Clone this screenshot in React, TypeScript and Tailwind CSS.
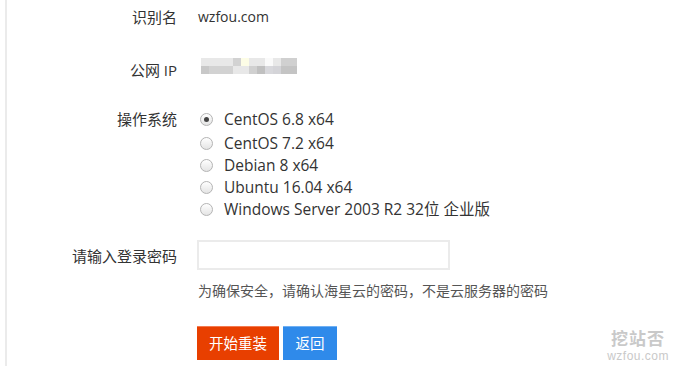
import React from "react";

const ipTop = [
  "bg-[#e8e8e8]", "bg-[#e8e8e8]", "bg-[#e8e8e8]", "bg-[#e8e8e8]", "bg-[#d2d2d2]", "bg-[#fdfde6]",
  "bg-[#e8e8e8]", "bg-[#e8e8e8]", "bg-[#fafafa]", "bg-[#e8e8e8]", "bg-[#d0d0d0]", "bg-[#d0d0d0]",
];
const ipBottom = [
  "bg-[#c8c8c8]", "bg-[#d2d2d2]", "bg-[#d2d2d2]", "bg-[#d2d2d2]", "bg-[#e8e8e8]", "bg-[#e8e8e8]",
  "bg-[#d0d0d0]", "bg-[#c0c0c0]", "bg-[#d8d8dc]", "bg-[#d4d4d8]", "bg-[#c4c4c4]", "bg-[#c4c4c4]",
];

const systems = [
  "CentOS 6.8 x64",
  "CentOS 7.2 x64",
  "Debian 8 x64",
  "Ubuntu 16.04 x64",
  "Windows Server 2003 R2 32位 企业版",
];

const Radio: React.FC<{ checked?: boolean }> = ({ checked }) => (
  <span className="flex h-[13px] w-[13px] items-center justify-center rounded-full border border-[#b4b4b4] bg-gradient-to-b from-white to-[#e4e4e4]">
    {checked && <span className="h-[5px] w-[5px] rounded-full bg-[#444]" />}
  </span>
);

const Row: React.FC<{ label: string; className?: string; children: React.ReactNode }> = ({ label, className, children }) => (
  <div className={`flex items-start ${className ?? ""}`}>
    <div className="w-[178px] shrink-0 pr-px text-right text-[15px] leading-[22px]">{label}</div>
    <div className="ml-5 flex flex-col">{children}</div>
  </div>
);

export default function App() {
  return (
    <div className="relative h-[366px] w-[680px] overflow-hidden bg-white font-['Open_Sans','Noto_Sans_CJK_SC',sans-serif] text-[14px] text-[#333]">
      <div className="flex h-full">
        <div className="ml-[5px] w-[2px] shrink-0 bg-[#ebebeb]" />
        <div className="flex flex-col pt-[6px] -ml-[7px]">
          <Row label="识别名">
            <span className="leading-[22px]">wzfou.com</span>
          </Row>

          <Row label="公网 IP" className="mt-[31px]">
            <div className="ml-[3px] mt-[-1px] flex flex-col">
              <div className="flex">
                {ipTop.map((c, i) => (
                  <span key={i} className={`h-2 w-2 ${c}`} />
                ))}
              </div>
              <div className="flex">
                {ipBottom.map((c, i) => (
                  <span key={i} className={`h-2 w-2 ${c}`} />
                ))}
              </div>
            </div>
          </Row>

          <Row label="操作系统" className="mt-[27px]">
            {systems.map((s, i) => (
              <label key={s} className={`flex items-center gap-[11px] pl-[2px] text-[15.5px] leading-[22px] ${i === 1 ? "mt-[2px]" : ""}`}>
                <Radio checked={i === 0} />
                <span>{s}</span>
              </label>
            ))}
          </Row>

          <div className="mt-5 flex items-center">
            <div className="w-[178px] shrink-0 pr-px pt-[3px] text-right text-[15px]">请输入登录密码</div>
            <input type="password" className="ml-[19px] h-[30px] w-[253px] border-2 border-[#ebebeb] outline-none" />
          </div>

          <div className="ml-[198px] mt-[10px] leading-[22px] text-[#555]">
            为确保安全，请确认海星云的密码，不是云服务器的密码
          </div>

          <div className="ml-[197px] mt-6 flex gap-1">
            <button className="h-[34px] w-[82px] border-t border-[#f47a50] bg-[#e83f00] text-[14.5px] text-white">开始重装</button>
            <button className="h-[34px] w-[54px] border-t border-[#6fb0f3] bg-[#2f8aea] text-[14.5px] text-white">返回</button>
          </div>
        </div>
      </div>

      <div className="absolute bottom-[3px] right-[11px] flex flex-col items-center text-[#c9c9c9]">
        <span className="text-[17px] leading-[20px] font-bold tracking-[1px]">挖站否</span>
        <span className="font-['Liberation_Sans',sans-serif] text-[12px] leading-[14px] tracking-[0.5px]">wzfou.com</span>
      </div>
    </div>
  );
}
